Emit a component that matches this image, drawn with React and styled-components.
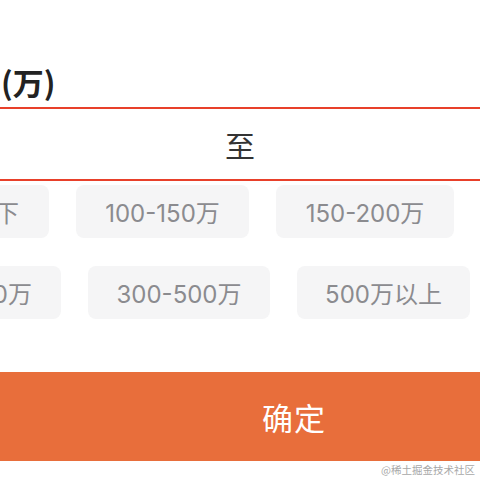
import styled, { createGlobalStyle } from "styled-components";

const GlobalStyle = createGlobalStyle`
	html, body {
		margin: 0;
		padding: 0;
		background: #ffffff;
		overflow: hidden;
	}
	body {
		font-family: "Noto Sans CJK SC", "Noto Sans", sans-serif;
	}
`;

const rows = [
	{
		shift: -123,
		chips: [
			{ label: "100万以下", width: 172 },
			{ label: "100-150万", width: 173 },
			{ label: "150-200万", width: 178 },
		],
	},
	{
		shift: -122,
		chips: [
			{ label: "200-300万", width: 183 },
			{ label: "300-500万", width: 182 },
			{ label: "500万以上", width: 173 },
		],
	},
];

const App = () => {
	return (
		<>
			<GlobalStyle />
			<Page>
				<Title>(万)</Title>
				<RangeInput>
					<span>至</span>
				</RangeInput>
				<ChipArea>
					{rows.map((row, index) => (
						<ChipRow key={index} $shift={row.shift}>
							{row.chips.map((chip) => (
								<Chip key={chip.label} $width={chip.width}>
									{chip.label}
								</Chip>
							))}
						</ChipRow>
					))}
				</ChipArea>
				<ConfirmButton>确定</ConfirmButton>
				<Watermark>@稀土掘金技术社区</Watermark>
			</Page>
		</>
	);
};
export default App;

const Page = styled.div`
	width: 480px;
	height: 480px;
	display: flex;
	flex-direction: column;
	overflow: hidden;
`;

const Title = styled.div`
	margin-top: 62px;
	height: 40px;
	line-height: 40px;
	padding-left: 1px;
	font-size: 31px;
	font-weight: 700;
	color: #222222;
	white-space: nowrap;
`;

const RangeInput = styled.div`
	margin-top: 5px;
	height: 70px;
	border-top: 2px solid #e8402a;
	border-bottom: 2px solid #e8402a;
	display: flex;
	align-items: center;
	justify-content: center;
	font-size: 30px;
	color: #333333;
`;

const ChipArea = styled.div`
	margin-top: 4px;
	display: flex;
	flex-direction: column;
	gap: 28px;
`;

const ChipRow = styled.div`
	display: flex;
	gap: 27px;
	margin-left: ${(p) => p.$shift}px;
`;

const Chip = styled.div`
	flex: none;
	width: ${(p) => p.$width}px;
	height: 53px;
	border-radius: 8px;
	background: #f5f5f6;
	color: #8b8b8f;
	font-family: Inter, "Noto Sans CJK SC", sans-serif;
	font-size: 24px;
	display: flex;
	align-items: center;
	justify-content: center;
	white-space: nowrap;
`;

const ConfirmButton = styled.div`
	margin-top: 53px;
	height: 89px;
	background: #e86e3b;
	color: #ffffff;
	font-size: 31px;
	letter-spacing: 1px;
	display: flex;
	align-items: center;
	justify-content: center;
	padding-left: 108px;
`;

const Watermark = styled.div`
	height: 18px;
	line-height: 18px;
	text-align: right;
	padding-right: 5px;
	font-size: 10.5px;
	color: #a8a8a8;
	white-space: nowrap;
`;
